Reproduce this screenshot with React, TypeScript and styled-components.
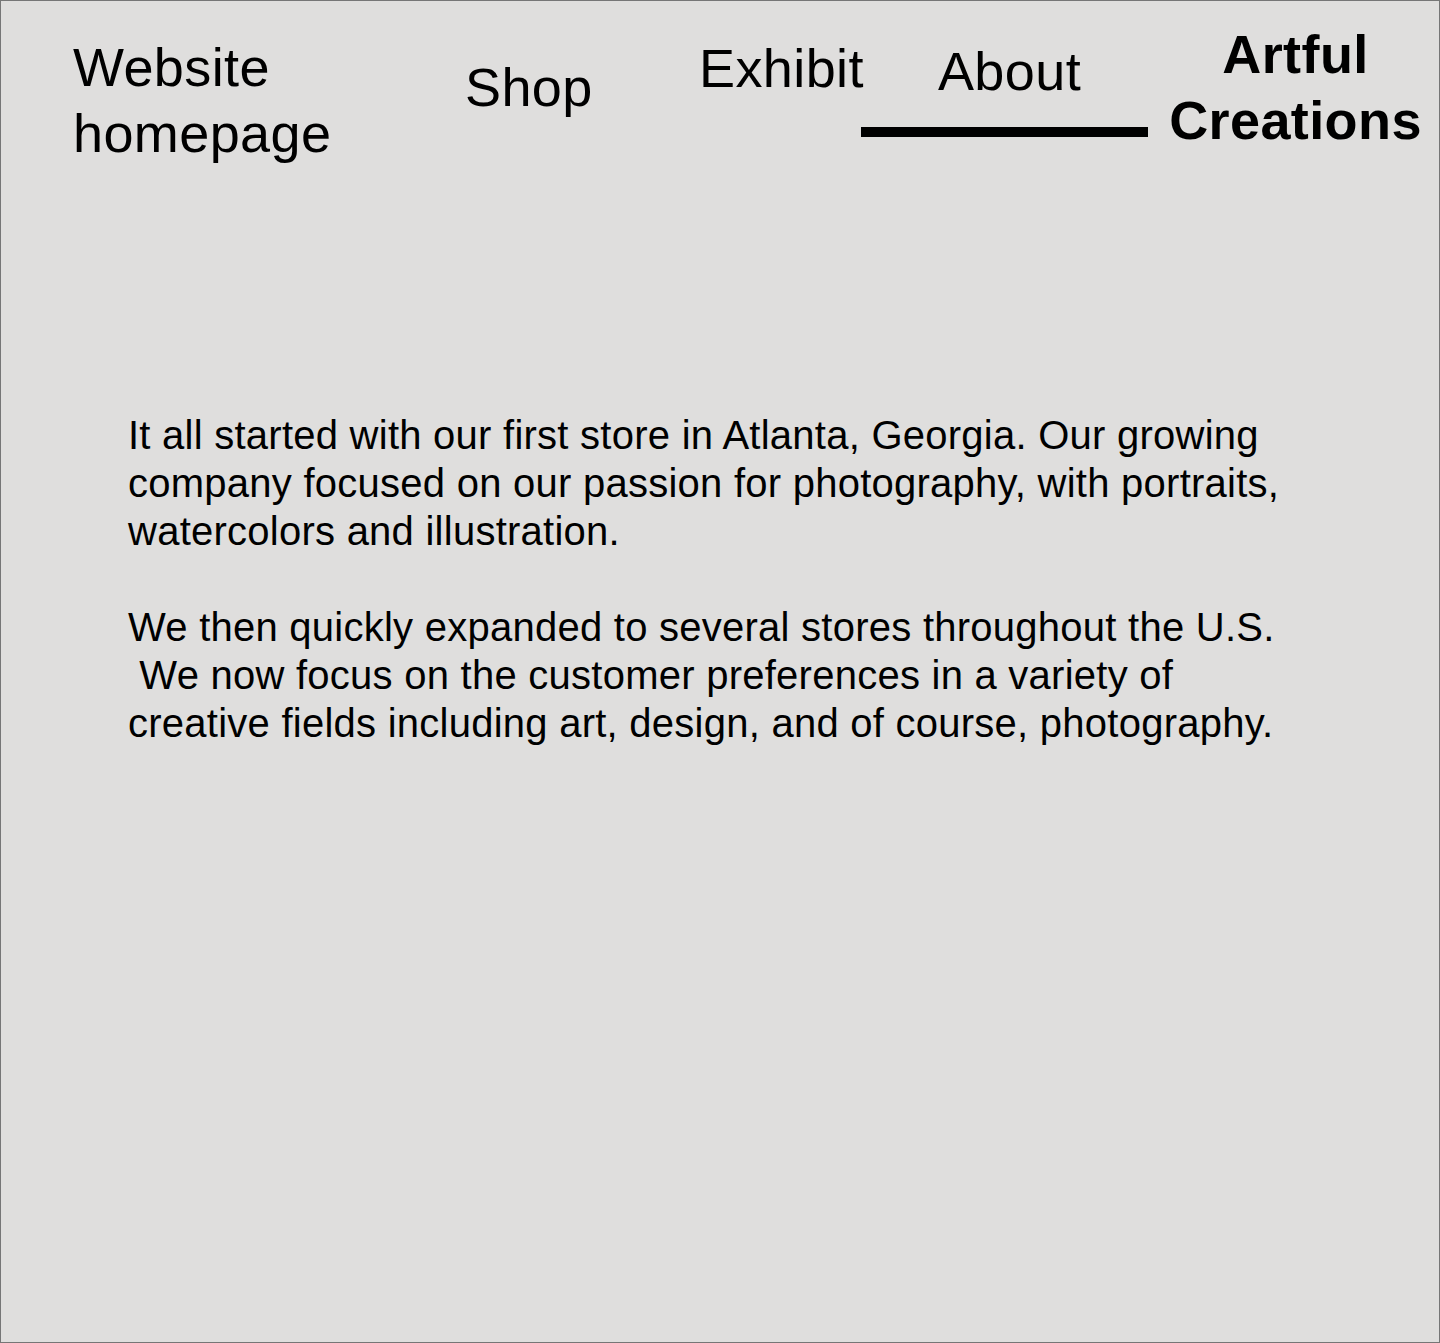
import styled, { createGlobalStyle } from 'styled-components';

const GlobalStyle = createGlobalStyle`
  html, body {
    margin: 0;
    padding: 0;
  }
  body {
    font-family: 'Liberation Sans', Arial, Helvetica, sans-serif;
    color: #000;
    background: #dfdedd;
  }
`;

const Page = styled.div`
  box-sizing: border-box;
  width: 1440px;
  height: 1343px;
  border: 1px solid #767676;
  background: #dfdedd;
  overflow: hidden;
`;

const Nav = styled.nav`
  display: grid;
  grid-template-columns: 392px 234px 162px 287px 1fr;
  align-items: start;
  padding: 20px 0 0 72px;
`;

const NavItem = styled.a<{ $offset?: number; $shift?: number; $center?: boolean; $bold?: boolean }>`
  display: block;
  margin-top: ${(p) => p.$offset ?? 0}px;
  padding-left: ${(p) => p.$shift ?? 0}px;
  font-size: 54px;
  line-height: 66px;
  letter-spacing: 0.4px;
  font-weight: ${(p) => (p.$bold ? 700 : 400)};
  text-align: ${(p) => (p.$center ? 'center' : 'left')};
  color: #000;
  text-decoration: none;
  white-space: nowrap;
`;

const ActiveItem = styled.div`
  display: flex;
  flex-direction: column;
  align-items: center;
  margin-top: 17px;
`;

const Underline = styled.span`
  display: block;
  width: 100%;
  height: 10px;
  margin-top: 23px;
  background: #000;
`;

const Content = styled.main`
  padding: 245px 0 0 127px;
`;

const Paragraph = styled.p`
  margin: 0 0 48px;
  font-size: 40px;
  line-height: 48px;
  letter-spacing: 0.25px;
`;

const Line = styled.span`
  display: block;
  white-space: pre;
`;

const paragraphs = [
  [
    'It all started with our first store in Atlanta, Georgia. Our growing',
    'company focused on our passion for photography, with portraits,',
    'watercolors and illustration.',
  ],
  [
    'We then quickly expanded to several stores throughout the U.S.',
    ' We now focus on the customer preferences in a variety of',
    'creative fields including art, design, and of course, photography.',
  ],
];

export default function App() {
  return (
    <>
      <GlobalStyle />
      <Page>
        <Nav>
          <NavItem href="#" $offset={13}>
            Website
            <br />
            homepage
          </NavItem>
          <NavItem href="#" $offset={33}>
            Shop
          </NavItem>
          <NavItem href="#" $offset={14}>
            Exhibit
          </NavItem>
          <ActiveItem>
            <NavItem href="#" $center $shift={10}>
              About
            </NavItem>
            <Underline />
          </ActiveItem>
          <NavItem href="#" $center $bold $shift={4}>
            Artful
            <br />
            Creations
          </NavItem>
        </Nav>
        <Content>
          {paragraphs.map((lines, i) => (
            <Paragraph key={i}>
              {lines.map((l, j) => (
                <Line key={j}>{l}</Line>
              ))}
            </Paragraph>
          ))}
        </Content>
      </Page>
    </>
  );
}
